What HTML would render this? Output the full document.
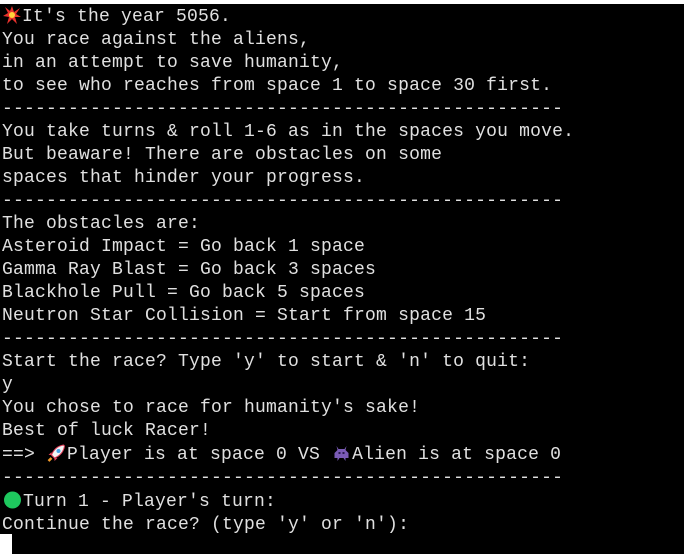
<!DOCTYPE html>
<html><head><meta charset="utf-8"><style>
html,body{margin:0;padding:0;background:#fff;width:684px;height:554px;overflow:hidden}
#t{position:absolute;left:0;top:4px;width:684px;height:550px;background:#000}
pre{margin:0;padding:1px 0 0 2px;font-family:"Liberation Mono",monospace;font-size:18px;letter-spacing:0.2px;line-height:23px;color:#e0e0e0;white-space:pre}
.e{display:inline-block;width:21px;height:20px;vertical-align:-4px}
#cur{position:absolute;left:0;top:534px;width:12px;height:20px;background:#fff}
</style></head><body>
<div id="t"><pre><svg class="e" viewBox="0 0 20 20" style="width:20px"><polygon points="10,1 12,7 18,3 14,9 19,12 13,12 15,19 10,14 5,19 7,12 1,11 6,8 3,2 8,6" fill="#e8312c"/><circle cx="10" cy="10" r="3" fill="#ffd23a"/></svg>It's the year 5056.
You race against the aliens,
in an attempt to save humanity,
to see who reaches from space 1 to space 30 first.
---------------------------------------------------
You take turns &amp; roll 1-6 as in the spaces you move.
But beaware! There are obstacles on some
spaces that hinder your progress.
---------------------------------------------------
The obstacles are:
Asteroid Impact = Go back 1 space
Gamma Ray Blast = Go back 3 spaces
Blackhole Pull = Go back 5 spaces
Neutron Star Collision = Start from space 15
---------------------------------------------------
Start the race? Type 'y' to start &amp; 'n' to quit:
y
You chose to race for humanity's sake!
Best of luck Racer!
==&gt; <svg class="e" viewBox="0 0 20 20"><path d="M17 2 C11 3 7 7 5 12 L8 15 C13 13 17 9 18 3 Z" fill="#f4f4f4" stroke="#e0405a" stroke-width="1"/><circle cx="12" cy="8" r="2" fill="#4aa6e8"/><path d="M5 12 L2 12 L5 9 Z M8 15 L8 18 L11 15 Z" fill="#e0405a"/><path d="M5 15 L2 18" stroke="#f39a2b" stroke-width="2.5"/></svg>Player is at space 0 VS <svg class="e" viewBox="0 0 20 20"><path d="M5 3 L7 6 L13 6 L15 3 L14 7 L17 10 L17 15 L14 15 L14 18 L12 15 L8 15 L6 18 L6 15 L3 15 L3 10 L6 7 Z" fill="#7a5bb5"/><rect x="7" y="9" width="2" height="2" fill="#2a1a50"/><rect x="11" y="9" width="2" height="2" fill="#2a1a50"/></svg>Alien is at space 0
---------------------------------------------------
<svg class="e" viewBox="0 0 20 20"><circle cx="10" cy="10" r="8.5" fill="#1ec85e"/></svg>Turn 1 - Player's turn:
Continue the race? (type 'y' or 'n'):</pre></div>
<div id="cur"></div>
</body></html>
